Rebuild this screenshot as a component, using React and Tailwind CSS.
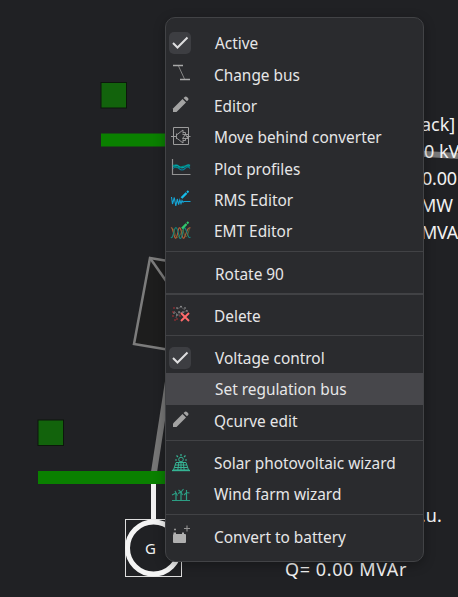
import clsx from 'clsx'

const menuGroups = [
  [
    { label: 'Active', checked: true },
    { label: 'Change bus', icon: ChangeBusIcon },
    { label: 'Editor', icon: PencilIcon },
    { label: 'Move behind converter', icon: ConverterIcon },
    { label: 'Plot profiles', icon: PlotIcon },
    { label: 'RMS Editor', icon: RmsIcon },
    { label: 'EMT Editor', icon: EmtIcon },
  ],
  [{ label: 'Rotate 90' }],
  [{ label: 'Delete', icon: DeleteIcon }],
  [
    { label: 'Voltage control', checked: true },
    { label: 'Set regulation bus', active: true },
    { label: 'Qcurve edit', icon: PencilIcon },
  ],
  [
    { label: 'Solar photovoltaic wizard', icon: SolarIcon },
    { label: 'Wind farm wizard', icon: WindIcon },
  ],
  [{ label: 'Convert to battery', icon: BatteryIcon }],
]

function Icon({ children }) {
  return (
    <svg width="22" height="22" viewBox="0 0 22 22" fill="none" className="shrink-0">
      {children}
    </svg>
  )
}

function CheckIcon() {
  return (
    <span className="flex h-[22px] w-[22px] shrink-0 items-center justify-center rounded-[5px] bg-[#3d3e42]">
      <Icon>
        <path d="M4 11L8.500 15.500L18.500 5.500" stroke="#dededf" strokeWidth="2" />
      </Icon>
    </span>
  )
}

function ChangeBusIcon() {
  return (
    <Icon>
      <path d="M4 2.500H14M11 16.500H21" stroke="#a9a9a9" strokeWidth="1.7" />
      <path d="M9.500 3L15.500 16" stroke="#858585" strokeWidth="1" />
    </Icon>
  )
}

function PencilIcon() {
  return (
    <Icon>
      <path d="M4 14.500L13.500 5L17 8.500L7.500 18H4Z" fill="#a3a3a3" />
      <path d="M14.500 4L16 2.700Q17 2 18 3L19.200 4.200Q20 5.200 19 6.200L17.900 7.300Z" fill="#a3a3a3" />
    </Icon>
  )
}

function ConverterIcon() {
  return (
    <Icon>
      <path d="M4.500 1.500H19.500V18.500H4.500ZM2 10.500H7M17.500 10.500H21.500" stroke="#9c9c9c" strokeWidth="1" />
      <path d="M7.500 7.500V13M7.500 9L14 4V7.500M7.500 12L14 17V13.500M14 6.500H16.500V8M14 14.500H16.500V12.500M13.500 8.500H19M16.500 8.500L13.500 12.500H19Z" stroke="#a2a2a2" strokeWidth=".9" />
    </Icon>
  )
}

function PlotIcon() {
  return (
    <Icon>
      <path d="M3.500 2V17.500H21.500" stroke="#929292" strokeWidth="1.2" />
      <path d="M4 9.500Q7 7 10 9.500T16 9.500T21 8.500" stroke="#00a6ab" strokeWidth="1.4" />
      <path d="M4 11.500Q7 8.500 10 11.500T16 11.500T21 11.500" stroke="#087e9b" strokeWidth="1.1" />
      <path d="M4 8Q8 12 12 10T21 10" stroke="#008a86" strokeWidth="1.2" />
    </Icon>
  )
}

function RmsIcon() {
  return (
    <Icon>
      <path d="M2.500 8L3.500 15L5.300 8.500L6.800 17L8.300 10L9.600 15.500L10.800 11L12 14.500L13 11.500L14 13.200L15 12.500H21.500" stroke="#16a5d5" strokeWidth="1.1" />
      <path d="M12.500 9L17.500 4" stroke="#16bce9" strokeWidth="2.400" />
      <path d="M18 3.500L19.500 2" stroke="#16bce9" strokeWidth="1.9" />
    </Icon>
  )
}

function EmtIcon() {
  return (
    <Icon>
      <path d="M2 8C4 6 5 20 7 18S9 6 11 8S13 20 15 18S18 6 21.500 8" stroke="#b65d38" strokeWidth="1.1" />
      <path d="M2 17C4 21 5 5 7.500 8S10 21 12 18S14 6 16 8S19 20 21.500 17" stroke="#16857c" strokeWidth="1.1" />
      <path d="M3 8C6 9 6 20 9.500 17S13 6 14.500 12S18 20 20.500 8" stroke="#6b7439" strokeWidth=".8" />
      <path d="M13 8.500L17.500 4" stroke="#31c86c" strokeWidth="2.400" />
      <path d="M18 3.500L19.500 2" stroke="#31c86c" strokeWidth="1.9" />
    </Icon>
  )
}

function DeleteIcon() {
  return (
    <Icon>
      <path d="M8 5L12 3L16 6M10 8L14 9L18 6M5 7L8 10L7 14M10 8V12" stroke="#77777a" strokeWidth=".6" />
      <path d="M8 4h.01M12 2.500h.01M16 4h.01M18 7h.01M10 8h.01M14 8h.01M8 11h.01M5 9h.01" stroke="#c4c4c4" strokeWidth="1.3" strokeLinecap="round" />
      <path d="M5 4h.01M4 8h.01M4 12h.01M8 15h.01M6 16h.01M11 12h.01" stroke="#df3038" strokeWidth="1.400" strokeLinecap="round" />
      <path d="M12 9L20 17M20 9L12 17" stroke="#ff6b6b" strokeWidth="1.9" />
    </Icon>
  )
}

function SolarIcon() {
  return (
    <Icon>
      <circle cx="12" cy="7.500" r="2.300" stroke="#35b494" />
      <path d="M12 2V4M7.500 3.500L9 5M16.500 3.500L15 5M6 8H8M16 8H18" stroke="#35b494" strokeWidth="1.2" />
      <path d="M7 10.500H17L19.500 18H4.500ZM6 13H18M5.200 15.500H18.800M9.800 10.500L8.800 18M12 10.500V18M14.200 10.500L15.200 18" stroke="#35b494" strokeWidth="1" />
      <path d="M3 18.500H21" stroke="#35b494" strokeWidth="1.400" />
    </Icon>
  )
}

function WindIcon() {
  return (
    <Icon>
      <path d="M3 17.500H21M7 17.500V10M12 17.500V9M17.500 17.500V10" stroke="#2c9e84" strokeWidth="1.2" />
      <path d="M3 12L7 10L8.500 12.500M7 10L6 8M9 10.500L12 9L14.500 6M12 9L9.500 7M12 9L13.500 12M15 12L17.500 9.500L20.500 10M17.500 9.500V7" stroke="#2c9e84" strokeWidth="1.1" />
    </Icon>
  )
}

function BatteryIcon() {
  return (
    <Icon>
      <path d="M4.500 9V7.500H7V9H13V7.500H15V9H16Q17 9 17 10V17Q17 18 16 18H5Q4 18 4 17V10Q4 9 5 9Z" fill="#b0b0b0" />
      <path d="M5 4.500H7M6 3.500V5.500M15 3.500H21M18 .5V6.500" stroke="#929292" strokeWidth="1.1" />
    </Icon>
  )
}

function MenuItem({ item }) {
  const ItemIcon = item.icon
  return (
    <button
      type="button"
      className={clsx('flex h-[31.4px] w-full items-center pl-[3px] text-left', item.active && 'bg-[#47474b]')}
    >
      {item.checked && <CheckIcon />}
      {ItemIcon && <ItemIcon />}
      {!item.checked && !ItemIcon && <span className="w-[22px]" />}
      <span className={clsx('whitespace-nowrap pt-[2px]', ItemIcon ? 'ml-[23px]' : 'ml-6')}>{item.label}</span>
    </button>
  )
}

function ContextMenu() {
  return (
    <div className="relative ml-[165px] h-[545px] w-[259px] overflow-hidden rounded-[10px] border border-[#424346] bg-[#2a2b2e] pt-[9px] font-['Noto_Sans',sans-serif] text-[15.4px] text-[#e6e6e7] shadow-[0_3px_12px_rgba(0,0,0,0.3)]">
      {menuGroups.map((group, i) => (
        <div key={i}>
          {i > 0 && (
            <div className="h-[10.8px] pt-1">
              <div className={clsx('w-full bg-[#414245]', i === 2 ? 'h-0.5' : 'h-px')} />
            </div>
          )}
          {group.map((item) => (
            <MenuItem key={item.label} item={item} />
          ))}
        </div>
      ))}
    </div>
  )
}

const gridLabels = [
  { text: 'ack]', className: 'left-[421px] top-[111px]' },
  { text: '0 kV', className: 'left-[424px] top-[138px]' },
  { text: '0.00', className: 'left-[422px] top-[165px] tracking-[-0.2px]' },
  { text: 'MW', className: 'left-[420px] top-[192px]' },
  { text: 'MVA', className: 'left-[421px] top-[219px] tracking-[-0.3px]' },
  { text: '.u.', className: 'left-[421px] top-[502px]' },
  { text: 'Q= 0.00 MVAr', className: 'left-[285px] top-[556px] tracking-[0.6px]' },
]

// Network diagram that lies under the menu
function Diagram() {
  return (
    <div className="absolute inset-0 font-['Noto_Sans',sans-serif] text-[#f2f2f2]">
      <svg width="458" height="597" viewBox="0 0 458 597" fill="none">
        <path d="M154 472L180 304" stroke="#777" strokeWidth="6" />
        <path d="M150 258L210 268L194 354L134 344Z" fill="#1d1d1d" stroke="#7c7c7c" strokeWidth="2.5" />
        <path d="M150 258L178 298" stroke="#7c7c7c" strokeWidth="2.5" />
        <path d="M410 153L458 156" stroke="#777" strokeWidth="6" />
        <path d="M153.500 483V520" stroke="#f1f1f1" strokeWidth="5" />
        <rect x="101" y="82.500" width="25.500" height="25.500" fill="#12630c" stroke="#0c170c" />
        <rect x="38" y="420" width="25.500" height="25.500" fill="#12630c" stroke="#0c170c" />
        <path d="M101 140H180M38 477.500H180" stroke="#0a8000" strokeWidth="13" />
        <rect x="125.500" y="519.500" width="56" height="57" stroke="#dedede" />
        <circle cx="153.500" cy="548" r="26" fill="#202124" stroke="#f4f4f4" strokeWidth="5" />
      </svg>
      <span className="absolute left-[145px] top-[539px] text-[15px] leading-[18px]">G</span>
      {gridLabels.map((label) => (
        <span key={label.text} className={clsx('absolute whitespace-nowrap text-[18px] leading-[26px]', label.className)}>
          {label.text}
        </span>
      ))}
    </div>
  )
}

export default function App() {
  return (
    <main className="relative h-[597px] w-[458px] overflow-hidden bg-[#202124] pt-[17px]">
      <Diagram />
      <ContextMenu />
    </main>
  )
}
